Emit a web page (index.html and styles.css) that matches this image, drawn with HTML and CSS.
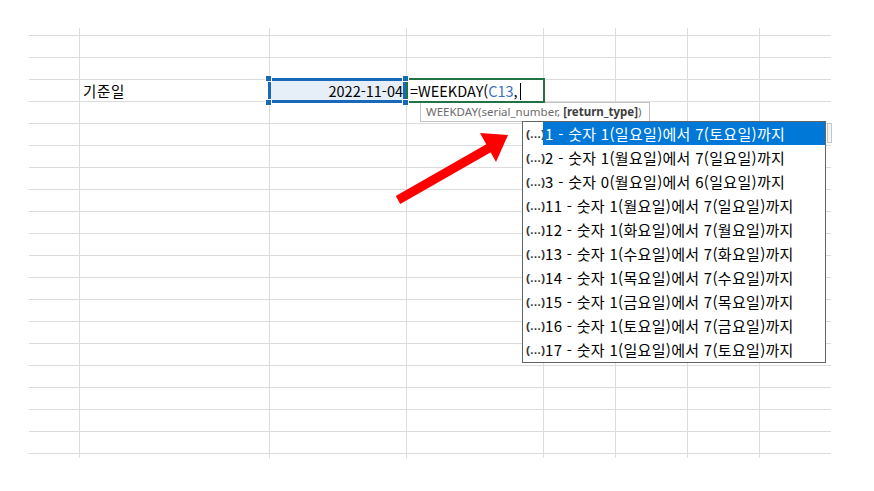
FILE: index.html
```html
<!DOCTYPE html>
<html lang="ko">
<head>
    <meta charset="UTF-8">
    <title>WEEKDAY</title>
    <link rel="stylesheet" href="styles.css">
</head>
<body>
<div class="sheet">
    <div class="row first"><div></div><div></div><div></div><div></div><div></div><div></div><div></div><div></div></div>
    <div class="row"><div></div><div></div><div></div><div></div><div></div><div></div><div></div><div></div></div>
    <div class="row"><div></div><div></div><div></div><div></div><div></div><div></div><div></div><div></div></div>
    <div class="row">
        <div></div>
        <div class="txt">기준일</div>
        <div class="num sel">
            2022-11-04
            <span class="hd tl"></span><span class="hd tr"></span><span class="hd bl"></span><span class="hd br"></span>
        </div>
        <div class="edit">=WEEKDAY(<span class="ref">C13</span>,<span class="caret"></span></div>
        <div></div><div></div><div></div><div></div>
    </div>
    <div class="row"><div></div><div></div><div></div><div></div><div></div><div></div><div></div><div></div></div>
    <div class="row"><div></div><div></div><div></div><div></div><div></div><div></div><div></div><div></div></div>
    <div class="row"><div></div><div></div><div></div><div></div><div></div><div></div><div></div><div></div></div>
    <div class="row"><div></div><div></div><div></div><div></div><div></div><div></div><div></div><div></div></div>
    <div class="row"><div></div><div></div><div></div><div></div><div></div><div></div><div></div><div></div></div>
    <div class="row"><div></div><div></div><div></div><div></div><div></div><div></div><div></div><div></div></div>
    <div class="row"><div></div><div></div><div></div><div></div><div></div><div></div><div></div><div></div></div>
    <div class="row"><div></div><div></div><div></div><div></div><div></div><div></div><div></div><div></div></div>
    <div class="row"><div></div><div></div><div></div><div></div><div></div><div></div><div></div><div></div></div>
    <div class="row"><div></div><div></div><div></div><div></div><div></div><div></div><div></div><div></div></div>
    <div class="row"><div></div><div></div><div></div><div></div><div></div><div></div><div></div><div></div></div>
    <div class="row"><div></div><div></div><div></div><div></div><div></div><div></div><div></div><div></div></div>
    <div class="row"><div></div><div></div><div></div><div></div><div></div><div></div><div></div><div></div></div>
    <div class="row"><div></div><div></div><div></div><div></div><div></div><div></div><div></div><div></div></div>
    <div class="row"><div></div><div></div><div></div><div></div><div></div><div></div><div></div><div></div></div>
    <div class="row"><div></div><div></div><div></div><div></div><div></div><div></div><div></div><div></div></div>
    <div class="row last"><div></div><div></div><div></div><div></div><div></div><div></div><div></div><div></div></div>
</div>

<!-- 함수 인수 힌트 -->
<div class="tip">WEEKDAY(serial_number, <b>[return_type]</b>)</div>

<!-- 자동완성 목록 -->
<ul class="list">
    <li class="on"><span class="ico">(…)</span><span class="lbl">1 - 숫자 1(일요일)에서 7(토요일)까지</span></li>
    <li><span class="ico">(…)</span><span class="lbl">2 - 숫자 1(월요일)에서 7(일요일)까지</span></li>
    <li><span class="ico">(…)</span><span class="lbl">3 - 숫자 0(월요일)에서 6(일요일)까지</span></li>
    <li><span class="ico">(…)</span><span class="lbl">11 - 숫자 1(월요일)에서 7(일요일)까지</span></li>
    <li><span class="ico">(…)</span><span class="lbl">12 - 숫자 1(화요일)에서 7(월요일)까지</span></li>
    <li><span class="ico">(…)</span><span class="lbl">13 - 숫자 1(수요일)에서 7(화요일)까지</span></li>
    <li><span class="ico">(…)</span><span class="lbl">14 - 숫자 1(목요일)에서 7(수요일)까지</span></li>
    <li><span class="ico">(…)</span><span class="lbl">15 - 숫자 1(금요일)에서 7(목요일)까지</span></li>
    <li><span class="ico">(…)</span><span class="lbl">16 - 숫자 1(토요일)에서 7(금요일)까지</span></li>
    <li><span class="ico">(…)</span><span class="lbl">17 - 숫자 1(일요일)에서 7(토요일)까지</span></li>
</ul>
<div class="scroll"></div>

<svg class="arrow" width="125" height="85" viewBox="0 0 125 85">
    <line x1="8" y1="75" x2="99" y2="23" stroke="#ff0000" stroke-width="9"/>
    <polygon points="118,10 90,8 106,37" fill="#ff0000"/>
</svg>
</body>
</html>
```

FILE: styles.css
```css
*{
    margin: 0;
    padding: 0;
    box-sizing: border-box;
}
body{
    position: relative;
    width: 874px;
    height: 491px;
    background-color: #fff;
    font-family: "Noto Sans CJK KR", "Noto Sans", sans-serif;
    color: #000;
}
.sheet{
    width: 802px;
    margin: 28px 0 0 29px;
}
.row{
    display: grid;
    grid-template-columns: 50px 190px 137px 137px 72px 72px 72px 72px;
    height: 22px;
    border-top: 1px solid #dcdcdc;
}
.row.first{
    height: 7px;
    border-top: none;
}
.row.last{
    height: 5px;
}
.row > div{
    position: relative;
    border-left: 1px solid #dcdcdc;
    font-size: 14.5px;
    line-height: 21px;
    white-space: nowrap;
}
.row > div:first-child{
    border-left: none;
}
.txt{
    padding-left: 3px;
    letter-spacing: 0.6px;
}
.num{
    text-align: right;
    padding-right: 3px;
}
.sel{
    background-color: #e6eef8;
}
.sel::after{
    content: "";
    position: absolute;
    left: -2px;
    top: -2px;
    right: 0;
    bottom: -2px;
    border: 3px solid #1a68b8;
}
.hd{
    position: absolute;
    width: 7px;
    height: 7px;
    background-color: #1a68b8;
    border: 1px solid #fff;
    z-index: 2;
}
.tl{ left: -5px; top: -5px; }
.tr{ right: -3px; top: -5px; }
.bl{ left: -5px; bottom: -5px; }
.br{ right: -3px; bottom: -5px; }
.edit{
    padding-left: 3px;
    z-index: 1;
}
.edit::after{
    content: "";
    position: absolute;
    left: -1px;
    top: -2px;
    right: -2px;
    bottom: -2px;
    border: 2px solid #217346;
}
.ref{
    color: #3a6fc4;
}
.caret{
    display: inline-block;
    width: 1px;
    height: 17px;
    margin-left: 2px;
    vertical-align: -3px;
    background-color: #000;
}
.tip{
    position: absolute;
    left: 420px;
    top: 102px;
    width: 230px;
    height: 20px;
    padding-left: 5px;
    background-color: #fff;
    border: 1px solid #c3c3c3;
    font-family: "Noto Sans", sans-serif;
    font-size: 11.5px;
    line-height: 18px;
    color: #6b6b6b;
    white-space: nowrap;
}
.tip b{
    color: #3e3e3e;
}
.list{
    position: absolute;
    left: 522px;
    top: 121px;
    width: 304px;
    list-style: none;
    background-color: #fff;
    border: 1px solid #646464;
    z-index: 3;
}
.list li{
    display: flex;
    align-items: center;
    height: 24px;
    font-size: 15px;
    letter-spacing: 0.3px;
    white-space: nowrap;
}
.ico{
    width: 20px;
    padding-left: 3px;
    font-family: "Liberation Sans", sans-serif;
    font-size: 11.5px;
    font-weight: bold;
    letter-spacing: 0;
    color: #333;
}
.lbl{
    flex: 1;
    height: 100%;
    line-height: 24px;
    padding-left: 2px;
}
.on .lbl{
    height: 23px;
    line-height: 23px;
    margin-bottom: 1px;
    background-color: #0078d7;
    color: #fff;
}
.scroll{
    position: absolute;
    left: 827px;
    top: 123px;
    width: 5px;
    height: 20px;
    background-color: #f4f4f4;
    border: 1px solid #c6c6c6;
}
.arrow{
    position: absolute;
    left: 390px;
    top: 125px;
    z-index: 4;
}
```
